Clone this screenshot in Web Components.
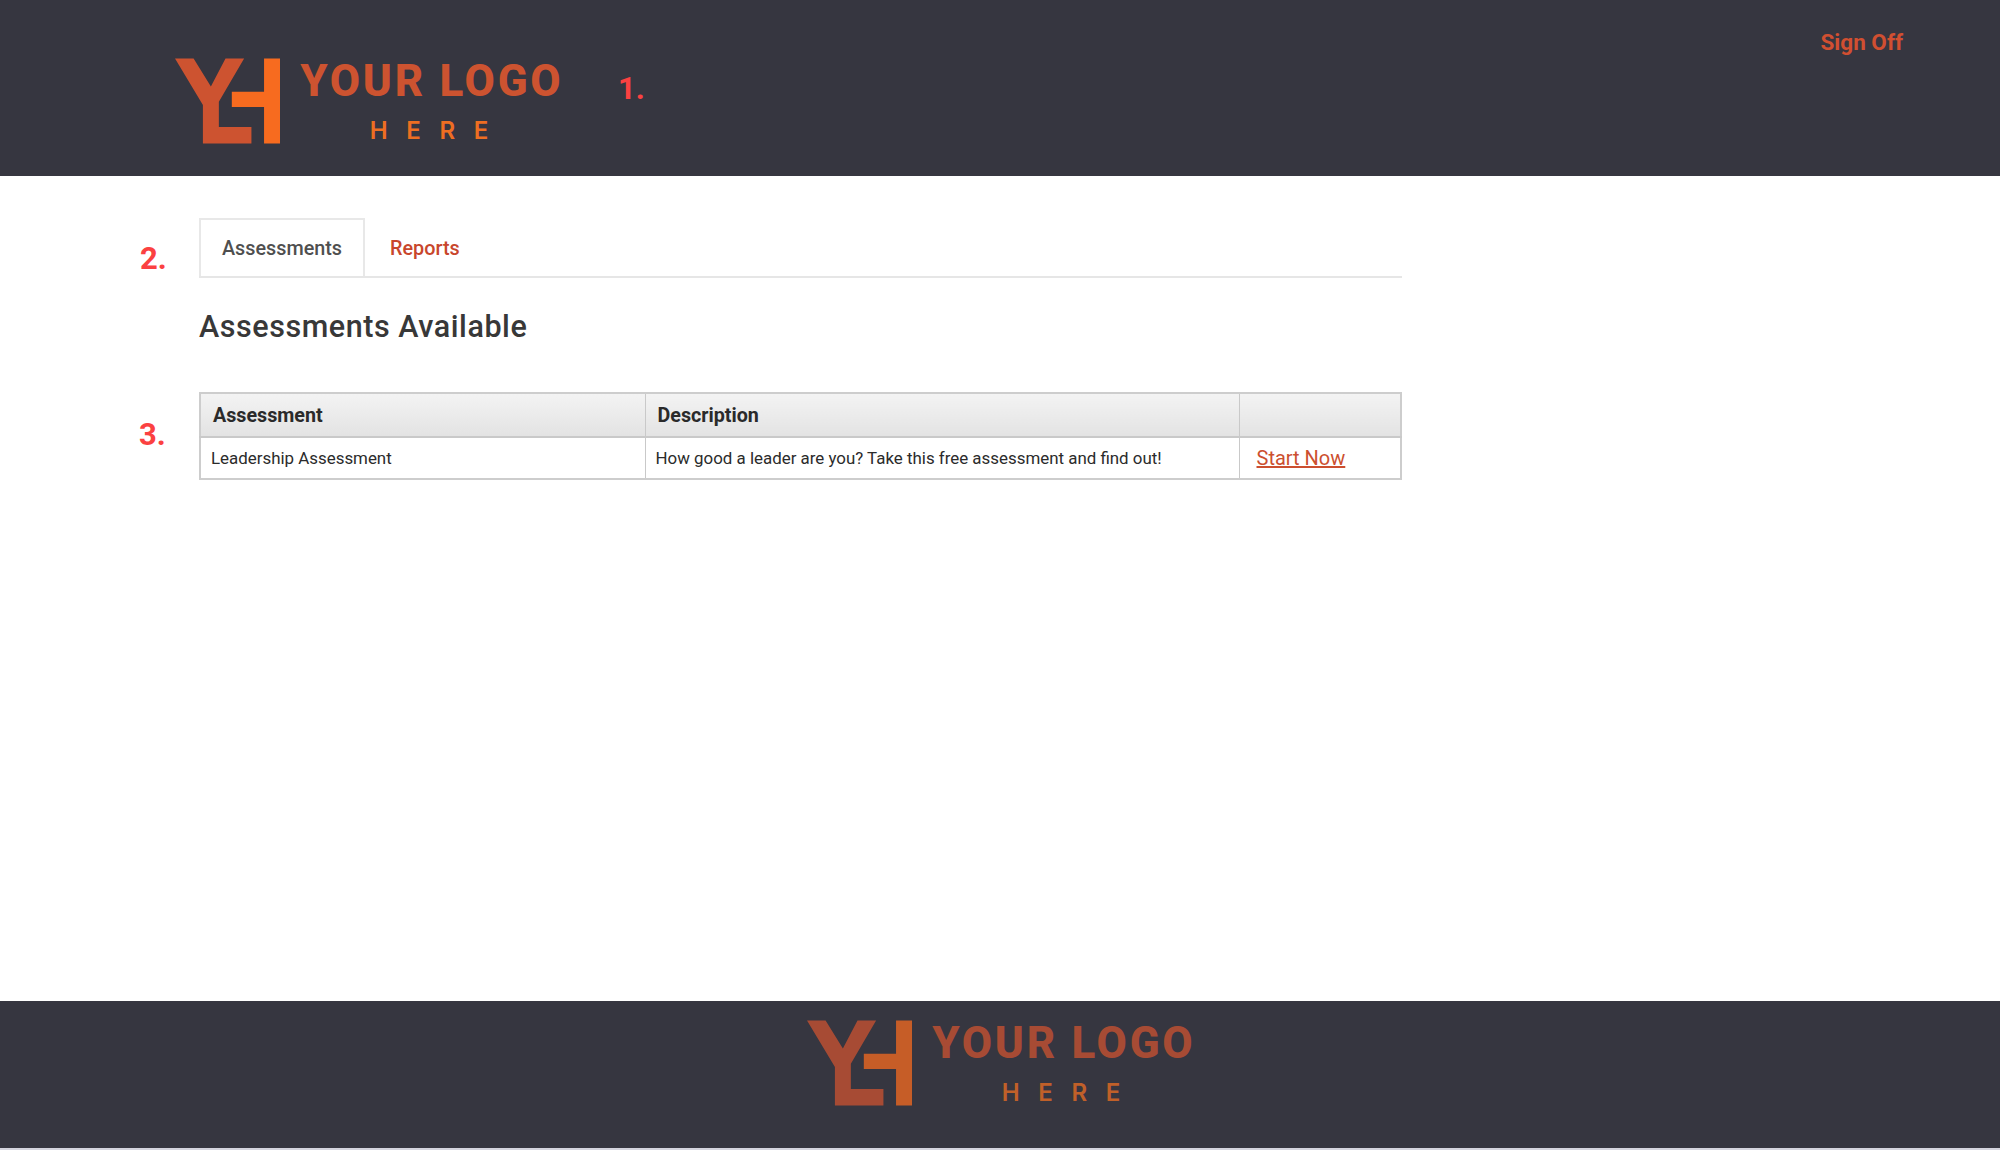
<!DOCTYPE html>
<html>
<head>
<meta charset="utf-8">
<title>Assessments</title>
<style>
html, body { margin: 0; height: 100%; background: #fff; }
body { font-family: Roboto, "Liberation Sans", sans-serif; }
</style>
</head>
<body>
<assess-app></assess-app>

<script>
const logoTemplate = document.createElement('template')
logoTemplate.innerHTML = /* HTML */`
<style>
:host { display: flex; align-items: flex-start; gap: 20px; }
svg { display: block; width: 105px; height: 86px; }
.words { display: flex; flex-direction: column; align-items: center; width: 262px; }
.your { font: 800 44px/46px Roboto, sans-serif; letter-spacing: 2.7px; color: #cd5330; white-space: nowrap; margin-right: -2.7px; margin-left: -1px; }
.here { font: 600 24px/28px Inter, sans-serif; letter-spacing: 18.6px; color: #ee6e22; white-space: nowrap; margin-right: -18.6px; margin-top: 13px; margin-left: -4px; }
</style>
<svg viewBox="44 40 316 256" aria-hidden="true">
  <polygon fill="#cd5330" points="44,40 100,40 152,124 196,40 252,40 176,170 176,246 274,246 274,296 128,296 128,180"/>
  <polygon fill="#f76b1f" points="312,40 360,40 360,296 312,296 312,186 215,186 215,140 312,140"/>
</svg>
<div class="words">
  <div class="your">YOUR LOGO</div>
  <div class="here">HERE</div>
</div>
`

class brandlogo extends HTMLElement {
  constructor () {
    super()
    this.attachShadow({ mode: 'open' })
    this.shadowRoot.appendChild(logoTemplate.content.cloneNode(true))
  }
}

const markTemplate = document.createElement('template')
markTemplate.innerHTML = /* HTML */`
<style>
:host { display: block; font: 700 31px/36px Roboto, sans-serif; color: #fb4141; }
</style>
<slot></slot>
`

class notemark extends HTMLElement {
  constructor () {
    super()
    this.attachShadow({ mode: 'open' })
    this.shadowRoot.appendChild(markTemplate.content.cloneNode(true))
  }
}

const headerTemplate = document.createElement('template')
headerTemplate.innerHTML = /* HTML */`
<style>
:host { display: flex; height: 176px; background: #363640; padding: 58px 97px 0 175px; box-sizing: border-box; }
note-mark { margin: 13px 0 0 56px; }
a { margin: -31px 0 0 auto; height: 30px; font: 700 22.5px/30px Roboto, sans-serif; color: #d14f31; text-decoration: none; }
</style>
<brand-logo></brand-logo>
<note-mark>1.</note-mark>
<a href="#">Sign Off</a>
`

class siteheader extends HTMLElement {
  constructor () {
    super()
    this.attachShadow({ mode: 'open' })
    this.shadowRoot.appendChild(headerTemplate.content.cloneNode(true))
  }
}

const tabsTemplate = document.createElement('template')
tabsTemplate.innerHTML = /* HTML */`
<style>
:host { display: flex; border-bottom: 2px solid #e6e6e6; height: 58px; font: 500 19.8px/58px Roboto, sans-serif; }
a { text-decoration: none; }
.on { color: #4f4f4f; border: 2px solid #e8e8e8; border-bottom: 0; height: 58px; box-sizing: border-box; padding: 0 21px; line-height: 58px; }
.off { color: #c8462c; padding: 0 25px; line-height: 62px; }
</style>
<a class="on" href="#">Assessments</a>
<a class="off" href="#">Reports</a>
`

class tabbar extends HTMLElement {
  constructor () {
    super()
    this.attachShadow({ mode: 'open' })
    this.shadowRoot.appendChild(tabsTemplate.content.cloneNode(true))
  }
}

const tableTemplate = document.createElement('template')
tableTemplate.innerHTML = /* HTML */`
<style>
:host { display: block; }
table { width: 100%; table-layout: fixed; border-collapse: collapse; border: 2px solid #cdcdcd; color: #2b2b2b; }
col.a { width: 445px; }
col.b { width: 594px; }
th { height: 42px; padding: 0 12px; text-align: left; font: 700 19.7px Roboto, sans-serif; color: #2a2a2a; background: linear-gradient(#f3f3f3, #e3e3e3); border: 1px solid #c9c9c9; border-bottom-width: 2px; }
td { height: 40px; padding: 0 10px; font: 400 16.9px Roboto, sans-serif; border: 1px solid #c9c9c9; }
td a { color: #cc4f2f; font-size: 20px; margin-left: 7px; }
</style>
<table>
  <colgroup><col class="a"><col class="b"><col></colgroup>
  <thead><tr><th>Assessment</th><th>Description</th><th></th></tr></thead>
  <tbody><tr>
    <td>Leadership Assessment</td>
    <td>How good a leader are you? Take this free assessment and find out!</td>
    <td><a href="#">Start Now</a></td>
  </tr></tbody>
</table>
`

class assesstable extends HTMLElement {
  constructor () {
    super()
    this.attachShadow({ mode: 'open' })
    this.shadowRoot.appendChild(tableTemplate.content.cloneNode(true))
  }
}

const rowTemplate = document.createElement('template')
rowTemplate.innerHTML = /* HTML */`
<style>
:host { display: grid; grid-template-columns: 199px 1203px; align-items: center; }
.side { padding-left: var(--mark-left, 140px); padding-top: var(--mark-top, 0); padding-bottom: var(--mark-bottom, 0); }
</style>
<div class="side"><slot name="mark"></slot></div>
<div class="body"><slot></slot></div>
`

class notedrow extends HTMLElement {
  constructor () {
    super()
    this.attachShadow({ mode: 'open' })
    this.shadowRoot.appendChild(rowTemplate.content.cloneNode(true))
  }
}

const footerTemplate = document.createElement('template')
footerTemplate.innerHTML = /* HTML */`
<style>
:host { display: block; height: 149px; box-sizing: border-box; background: #363640; border-bottom: 2px solid #d4d4de; padding: 19px 0 0 807px; }
brand-logo { opacity: .75; }
</style>
<brand-logo></brand-logo>
`

class sitefooter extends HTMLElement {
  constructor () {
    super()
    this.attachShadow({ mode: 'open' })
    this.shadowRoot.appendChild(footerTemplate.content.cloneNode(true))
  }
}

const appTemplate = document.createElement('template')
appTemplate.innerHTML = /* HTML */`
<style>
:host { display: flex; flex-direction: column; height: 1150px; overflow: hidden; }
main { flex: 1; padding-top: 42px; }
h1 { margin: 0; padding: 29px 0 0 199px; height: 85px; font: 500 30.5px/40px Roboto, sans-serif; letter-spacing: .55px; color: #383838; }
</style>
<site-header></site-header>
<main>
  <noted-row style="--mark-top: 22px">
    <note-mark slot="mark">2.</note-mark>
    <tab-bar></tab-bar>
  </noted-row>
  <h1>Assessments Available</h1>
  <noted-row style="--mark-left: 139px; --mark-bottom: 2px">
    <note-mark slot="mark">3.</note-mark>
    <assess-table></assess-table>
  </noted-row>
</main>
<site-footer></site-footer>
`

class assessapp extends HTMLElement {
  constructor () {
    super()
    this.attachShadow({ mode: 'open' })
    this.shadowRoot.appendChild(appTemplate.content.cloneNode(true))
  }
}

window.customElements.define('brand-logo', brandlogo)
window.customElements.define('note-mark', notemark)
window.customElements.define('site-header', siteheader)
window.customElements.define('tab-bar', tabbar)
window.customElements.define('assess-table', assesstable)
window.customElements.define('noted-row', notedrow)
window.customElements.define('site-footer', sitefooter)
window.customElements.define('assess-app', assessapp)
</script>
</body>
</html>
